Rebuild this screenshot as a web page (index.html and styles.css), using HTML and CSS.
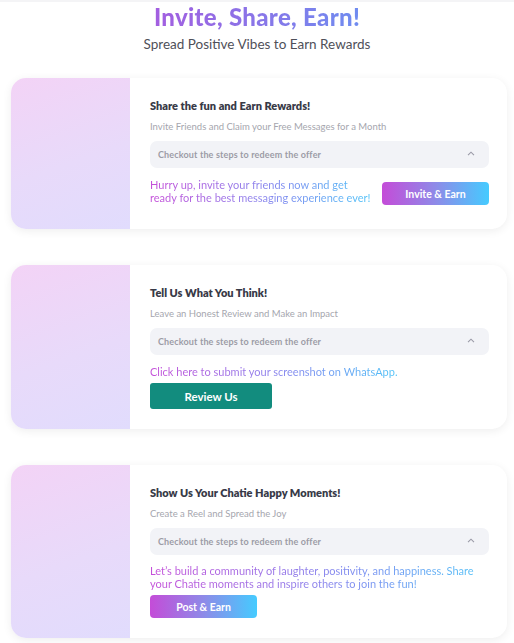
FILE: index.html
```html
<!DOCTYPE html>
<html>
<head>
<meta charset="utf-8">
<link rel="stylesheet" href="styles.css">
</head>
<body>
<div class="topline"></div>
<header class="hero">
  <h1 class="hero-title">Invite, Share, Earn!</h1>
  <p class="hero-sub">Spread Positive Vibes to Earn Rewards</p>
</header>
<main class="cards">
  <section class="card card-1">
    <div class="card-art"></div>
    <div class="card-body">
      <h2 class="card-title">Share the fun and Earn Rewards!</h2>
      <p class="card-sub">Invite Friends and Claim your Free Messages for a Month</p>
      <div class="steps"><span>Checkout the steps to redeem the offer</span><svg class="chev" width="8" height="5" viewBox="0 0 8 5"><path d="M1 4.2 L4 1.2 L7 4.2" fill="none" stroke="#9a9aa6" stroke-width="1.1"/></svg></div>
      <div class="row">
        <p class="grad-text">Hurry up, invite your friends now and get ready for the best messaging experience ever!</p>
        <button class="btn btn-grad btn-invite">Invite &amp; Earn</button>
      </div>
    </div>
  </section>
  <section class="card card-2">
    <div class="card-art"></div>
    <div class="card-body">
      <h2 class="card-title">Tell Us What You Think!</h2>
      <p class="card-sub">Leave an Honest Review and Make an Impact</p>
      <div class="steps"><span>Checkout the steps to redeem the offer</span><svg class="chev" width="8" height="5" viewBox="0 0 8 5"><path d="M1 4.2 L4 1.2 L7 4.2" fill="none" stroke="#9a9aa6" stroke-width="1.1"/></svg></div>
      <p class="grad-text single">Click here to submit your screenshot on WhatsApp.</p>
      <button class="btn btn-green">Review Us</button>
    </div>
  </section>
  <section class="card card-3">
    <div class="card-art"></div>
    <div class="card-body">
      <h2 class="card-title">Show Us Your Chatie Happy Moments!</h2>
      <p class="card-sub">Create a Reel and Spread the Joy</p>
      <div class="steps"><span>Checkout the steps to redeem the offer</span><svg class="chev" width="8" height="5" viewBox="0 0 8 5"><path d="M1 4.2 L4 1.2 L7 4.2" fill="none" stroke="#9a9aa6" stroke-width="1.1"/></svg></div>
      <p class="grad-text wide">Let’s build a community of laughter, positivity, and happiness. Share your Chatie moments and inspire others to join the fun!</p>
      <button class="btn btn-grad btn-post">Post &amp; Earn</button>
    </div>
  </section>
</main>
</body>
</html>
```

FILE: styles.css
```css
* { box-sizing: border-box; }
html, body { margin: 0; padding: 0; background: #ffffff; }
body {
  font-family: "Lato", "Open Sans", sans-serif;
  color: #3d3d4a;
  width: 514px;
  overflow: hidden;
}
.topline { height: 2px; background: #f4f4f6; }
.hero { text-align: center; }
.hero-title {
  margin: 0;
  font-size: 24px;
  font-weight: 900;
  line-height: 30px;
  letter-spacing: 0.3px;
  background: linear-gradient(90deg, #a35ee0 0%, #6f8cf0 100%);
  -webkit-background-clip: text;
  background-clip: text;
  color: transparent;
  display: inline-block;
}
.hero-sub {
  margin: 3px 0 0;
  font-size: 13.5px;
  line-height: 18px;
  color: #4f5059;
}
.cards {
  display: flex;
  flex-direction: column;
  gap: 36px;
  padding: 25px 7px 6px 11px;
}
.card {
  display: flex;
  background: #ffffff;
  border-radius: 15px;
  box-shadow: 0 2px 10px rgba(0, 0, 0, 0.07);
  overflow: hidden;
}
.card-art {
  width: 119px;
  flex: none;
  background: linear-gradient(160deg, #f3d3f6 0%, #e8dafa 55%, #e1dcfd 100%);
}
.card-body {
  flex: 1;
  padding: 21px 18px 20px 20px;
}
.card-1 .card-body { padding-bottom: 24px; }
.card-title {
  margin: 0;
  font-size: 11px;
  line-height: 14px;
  font-weight: 800;
  color: #383a47;
}
.card-sub {
  margin: 8px 0 0;
  font-size: 9.5px;
  line-height: 12px;
  color: #a5a6ae;
}
.steps {
  margin-top: 8px;
  height: 27px;
  border-radius: 7px;
  background: #f2f3f7;
  display: flex;
  align-items: center;
  justify-content: space-between;
  padding: 0 14px 0 8px;
  font-size: 9px;
  letter-spacing: 0.15px;
  font-weight: 700;
  color: #9c9ca6;
}
.chev { display: block; margin-top: -2px; }
.grad-text {
  margin: 0;
  font-size: 11px;
  line-height: 13px;
  background: linear-gradient(90deg, #c54fd9 0%, #7f8ef0 60%, #4ec3f8 100%);
  -webkit-background-clip: text;
  background-clip: text;
  color: transparent;
}
.row {
  display: flex;
  align-items: flex-start;
  justify-content: space-between;
  margin-top: 10px;
}
.row .grad-text { width: 222px; flex: none; }
.single { margin-top: 10px; display: inline-block; }
.wide { margin-top: 10px; line-height: 12.5px; }
.btn {
  border: none;
  font-family: inherit;
  font-weight: 700;
  color: #ffffff;
  display: flex;
  align-items: center;
  justify-content: center;
  padding: 0;
}
.btn-grad {
  background: linear-gradient(90deg, #c44cd8 0%, #8e8ae8 50%, #45cbff 100%);
  border-radius: 4px;
  font-size: 10.5px;
}
.btn-invite { width: 107px; height: 23px; flex: none; margin-top: 4px; }
.btn-post { width: 107px; height: 23px; margin-top: 5px; }
.btn-green {
  background: #128c7e;
  border-radius: 3px;
  width: 122px;
  height: 26px;
  font-size: 11.5px;
  margin-top: 4px;
}
```
